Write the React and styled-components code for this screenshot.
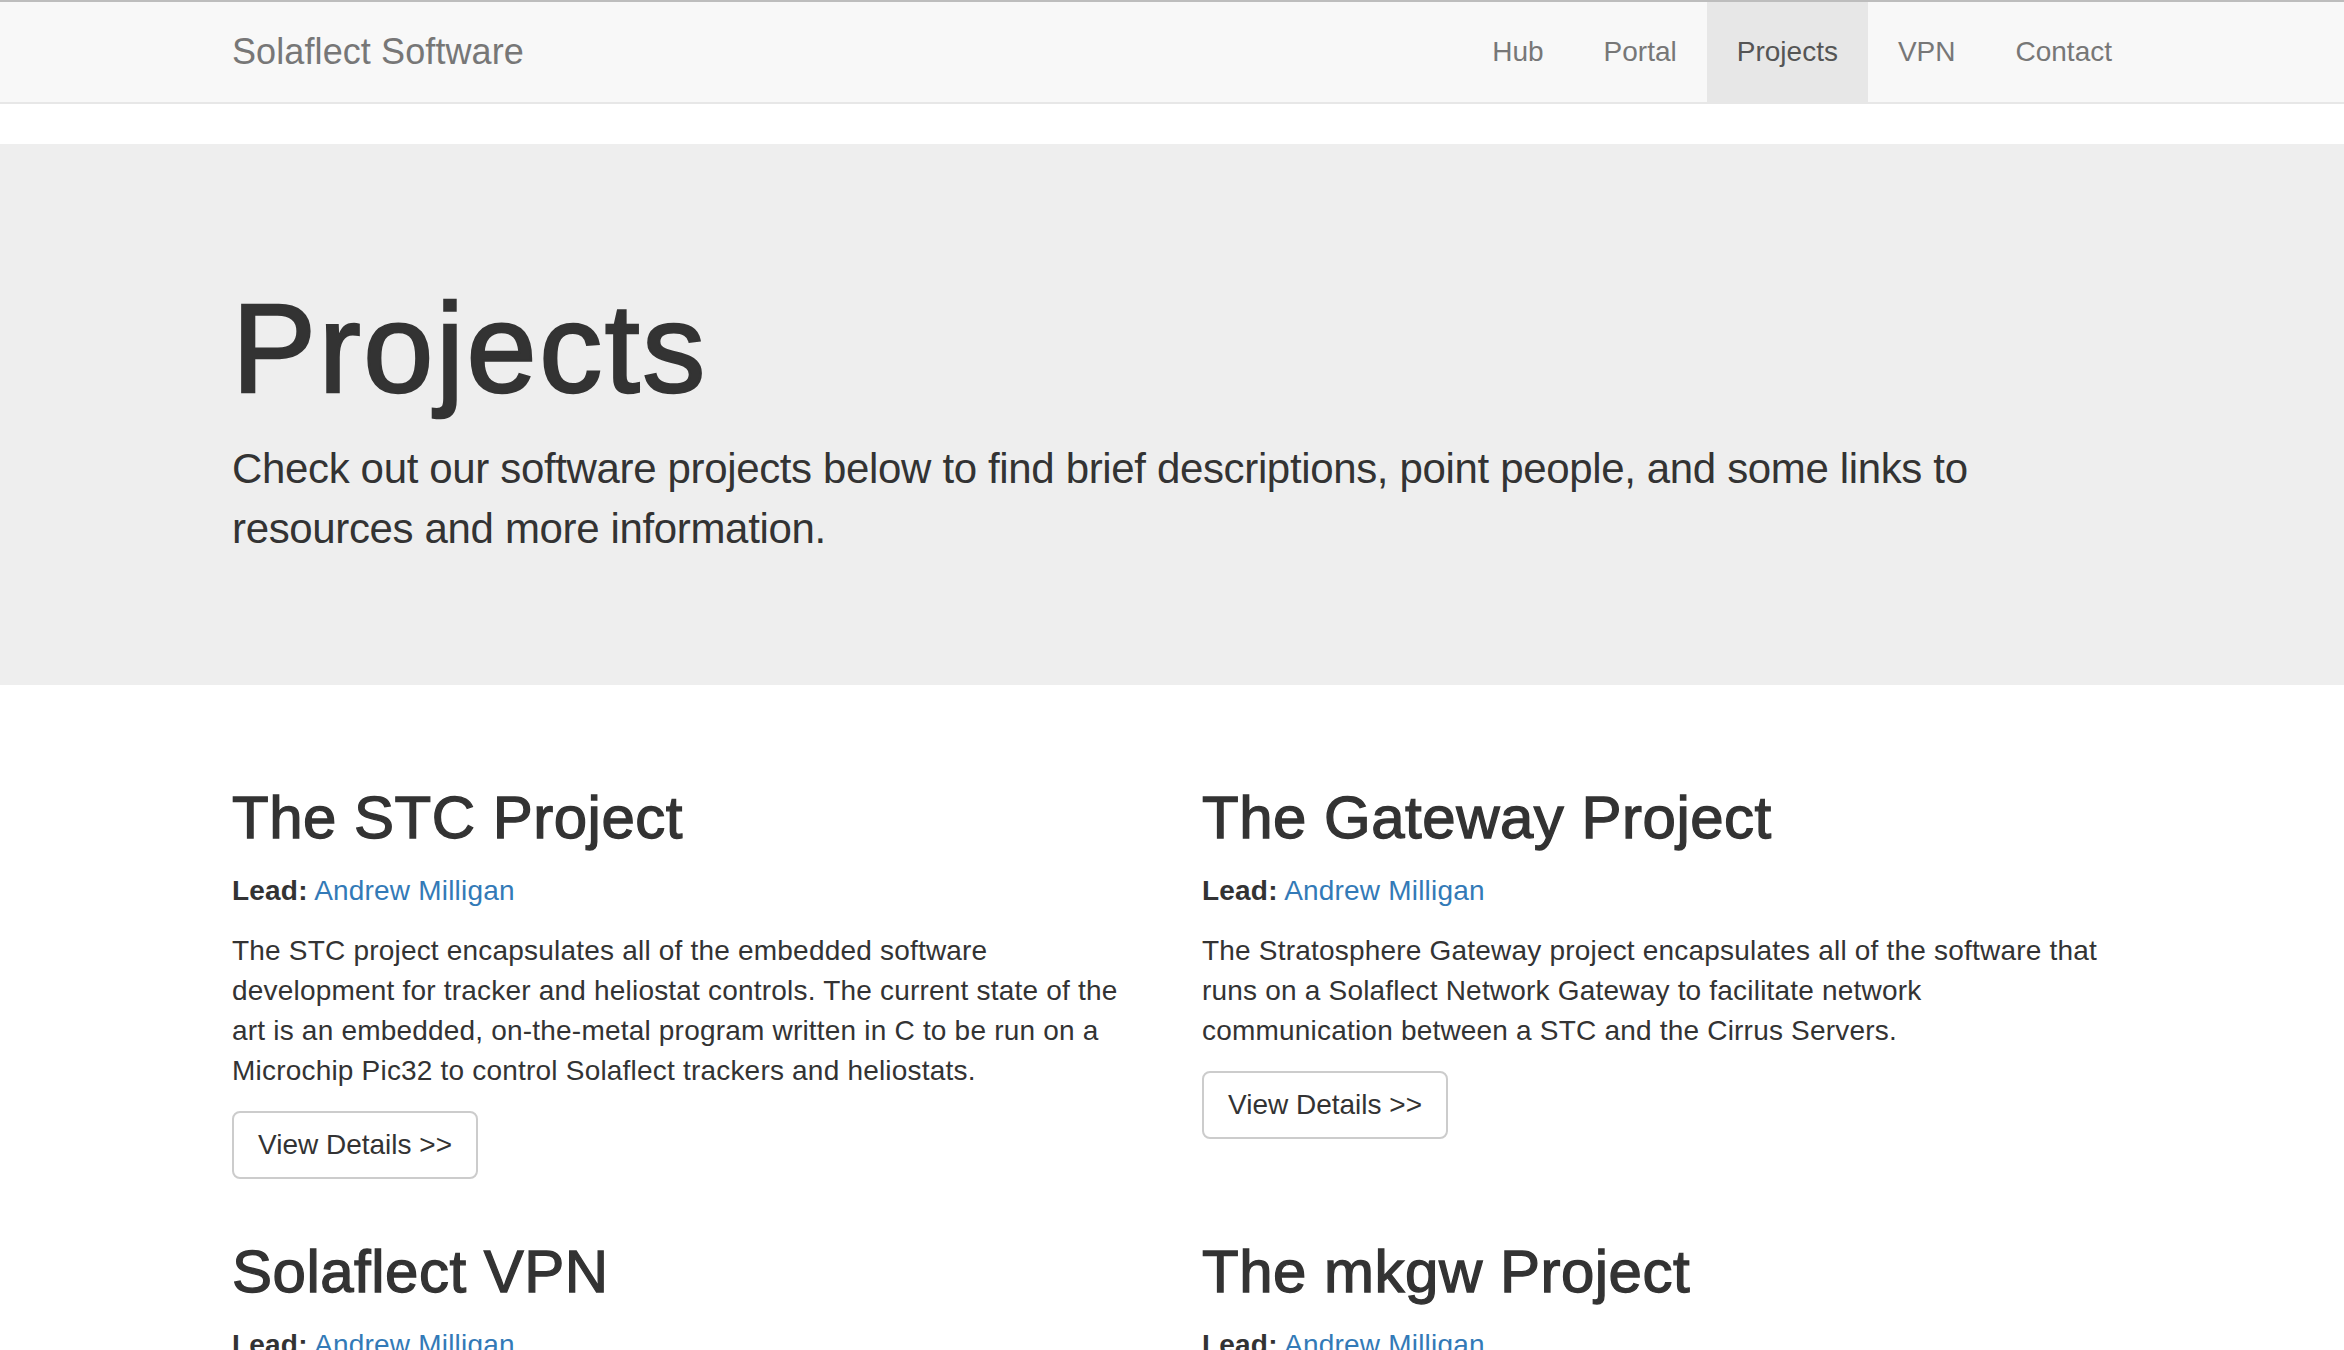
import React from "react";
import styled, { createGlobalStyle } from "styled-components";

const GlobalStyle = createGlobalStyle`
  html, body {
    margin: 0;
    padding: 0;
    overflow: hidden;
  }
  body {
    font-family: "Liberation Sans", Arial, sans-serif;
    font-size: 28px;
    line-height: 40px;
    color: #333;
    background: #fff;
  }
  * {
    box-sizing: border-box;
  }
`;

const Container = styled.div`
  width: 1940px;
  margin: 0 auto;
  padding: 0 30px;
`;

const Navbar = styled.nav`
  background-color: #f8f8f8;
  border-top: 2px solid #bdbdbd;
  border-bottom: 2px solid #e7e7e7;
  margin-bottom: 40px;
`;
const NavInner = styled.div`
  display: flex;
  justify-content: space-between;
  align-items: stretch;
  height: 100px;
`;
const Brand = styled.a`
  margin-left: -30px;
  padding: 30px;
  font-size: 36px;
  line-height: 40px;
  letter-spacing: 0.1px;
  color: #777;
  text-decoration: none;
`;
const NavList = styled.ul`
  display: flex;
  list-style: none;
  margin: 0 -30px 0 0;
  padding: 0;
`;
const NavLink = styled.a`
  display: block;
  padding: 30px;
  line-height: 40px;
  font-size: 28px;
  text-decoration: none;
  color: ${(p) => (p.$active ? "#555" : "#777")};
  background-color: ${(p) => (p.$active ? "#e7e7e7" : "transparent")};
`;

const Jumbotron = styled.header`
  background-color: #eee;
  padding: 96px 0;
  margin-bottom: 60px;
`;
const Title = styled.h1`
  font-size: 126px;
  font-weight: 500;
  line-height: 1.1;
  letter-spacing: 2.6px;
  -webkit-text-stroke: 2.4px #333;
  margin: 40px 0 20px;
  color: #333;
`;
const Intro = styled.p`
  font-size: 42px;
  font-weight: 300;
  line-height: 60px;
  letter-spacing: -0.35px;
  margin: 0 0 30px;
`;

const Row = styled.div`
  display: grid;
  grid-template-columns: 1fr 1fr;
  margin: 0 -30px;
`;
const Column = styled.section`
  padding: 0 30px;
`;
const ProjectTitle = styled.h2`
  font-size: 60px;
  font-weight: 500;
  line-height: 1.1;
  letter-spacing: 0.5px;
  -webkit-text-stroke: 1.3px #333;
  margin: 40px 0 20px;
`;
const Text = styled.p`
  margin: 0 0 20px;
  letter-spacing: 0.2px;
`;
const Link = styled.a`
  color: #337ab7;
  text-decoration: none;
`;
const Button = styled.a`
  display: inline-block;
  padding: 12px 24px;
  font-size: 28px;
  line-height: 40px;
  letter-spacing: 0;
  color: #333;
  background-color: #fff;
  border: 2px solid #ccc;
  border-radius: 8px;
  text-decoration: none;
`;

const navItems = ["Hub", "Portal", "Projects", "VPN", "Contact"];

const projects = [
  [
    {
      title: "The STC Project",
      lead: "Andrew Milligan",
      desc: "The STC project encapsulates all of the embedded software development for tracker and heliostat controls. The current state of the art is an embedded, on-the-metal program written in C to be run on a Microchip Pic32 to control Solaflect trackers and heliostats.",
    },
    {
      title: "The Gateway Project",
      lead: "Andrew Milligan",
      desc: "The Stratosphere Gateway project encapsulates all of the software that runs on a Solaflect Network Gateway to facilitate network communication between a STC and the Cirrus Servers.",
    },
  ],
  [
    { title: "Solaflect VPN", lead: "Andrew Milligan" },
    { title: "The mkgw Project", lead: "Andrew Milligan" },
  ],
];

const ProjectCard = ({ project }) => (
  <Column>
    <ProjectTitle>{project.title}</ProjectTitle>
    <Text>
      <strong>Lead:</strong> <Link href="#">{project.lead}</Link>
    </Text>
    {project.desc && <Text>{project.desc}</Text>}
    {project.desc && (
      <Text>
        <Button href="#">View Details &gt;&gt;</Button>
      </Text>
    )}
  </Column>
);

export default function App() {
  return (
    <>
      <GlobalStyle />
      <Navbar>
        <Container>
          <NavInner>
            <Brand href="#">Solaflect Software</Brand>
            <NavList>
              {navItems.map((item) => (
                <li key={item}>
                  <NavLink href="#" $active={item === "Projects"}>
                    {item}
                  </NavLink>
                </li>
              ))}
            </NavList>
          </NavInner>
        </Container>
      </Navbar>
      <Jumbotron>
        <Container>
          <Title>Projects</Title>
          <Intro>
            Check out our software projects below to find brief descriptions,
            point people, and some links to resources and more information.
          </Intro>
        </Container>
      </Jumbotron>
      <Container>
        {projects.map((row, i) => (
          <Row key={i}>
            {row.map((p) => (
              <ProjectCard key={p.title} project={p} />
            ))}
          </Row>
        ))}
      </Container>
    </>
  );
}
